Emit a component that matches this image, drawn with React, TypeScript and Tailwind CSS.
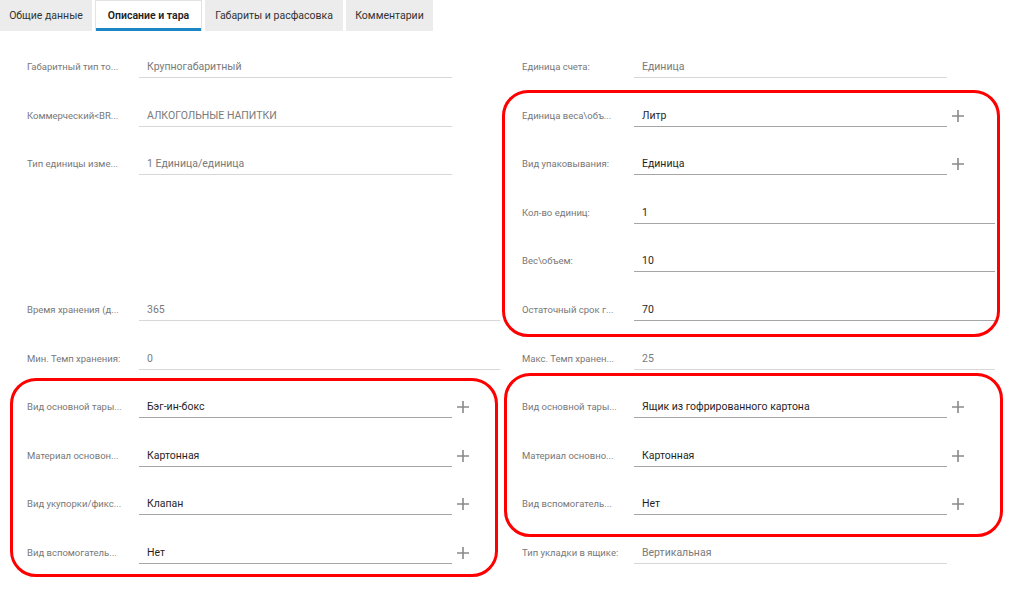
import React from "react";

type Field = {
  label: string;
  value: string;
  editable?: boolean;
  plus?: boolean;
  wide?: boolean;
};

const tabs = ["Общие данные", "Описание и тара", "Габариты и расфасовка", "Комментарии"];
const tabWidths = ["w-[92px]", "w-[107px]", "w-[138px]", "w-[87px]"];

const PlusIcon = () => (
  <svg width="14" height="14" viewBox="0 0 14 14" className="text-[#8a8a8a]">
    <path d="M7 1v12M1 7h12" stroke="currentColor" strokeWidth="1.6" fill="none" />
  </svg>
);

const Row = ({ field }: { field?: Field }) => {
  if (!field) return <div className="h-[48.6px]" />;
  const { label, value, editable, plus, wide } = field;
  return (
    <div className="h-[48.6px] flex items-end pb-[10.6px]">
      <div className="w-[112px] shrink-0 h-[22px] leading-[22px] text-[9.5px] text-[#787878] whitespace-nowrap">
        {label}
      </div>
      <div
        className={`${wide ? "w-[361px]" : "w-[313px]"} h-[22px] border-b pl-[8px] leading-[21px] text-[10.5px] ${
          editable ? "border-[#a6a6a6] text-[#1f1f1f]" : "border-[#d8d8d8] text-[#7a7a7a]"
        }`}
      >
        {value}
      </div>
      {!wide && (
        <div className="w-[48px] h-[22px] flex items-center pl-[4px]">
          {plus && <PlusIcon />}
        </div>
      )}
    </div>
  );
};

// red annotation frame over a group of rows
const Marked = ({ frame, children }: { frame: string; children: React.ReactNode }) => (
  <div className="relative">
    {children}
    <div className={`absolute border-[3px] border-[#ff0000] rounded-[26px] pointer-events-none ${frame}`} />
  </div>
);

const leftTop: (Field | undefined)[] = [
  { label: "Габаритный тип то...", value: "Крупногабаритный" },
  { label: "Коммерческий<BR...", value: "АЛКОГОЛЬНЫЕ НАПИТКИ" },
  { label: "Тип единицы изме...", value: "1 Единица/единица" },
  undefined,
  undefined,
  { label: "Время хранения (д...", value: "365", wide: true },
  { label: "Мин. Темп хранения:", value: "0", wide: true },
];

const leftBottom: Field[] = [
  { label: "Вид основной тары...", value: "Бэг-ин-бокс", editable: true, plus: true },
  { label: "Материал основон...", value: "Картонная", editable: true, plus: true },
  { label: "Вид укупорки/фикс...", value: "Клапан", editable: true, plus: true },
  { label: "Вид вспомогатель...", value: "Нет", editable: true, plus: true },
];

const rightMid: Field[] = [
  { label: "Единица веса\\объ...", value: "Литр", editable: true, plus: true },
  { label: "Вид упаковывания:", value: "Единица", editable: true, plus: true },
  { label: "Кол-во единиц:", value: "1", editable: true, wide: true },
  { label: "Вес\\объем:", value: "10", editable: true, wide: true },
  { label: "Остаточный срок г...", value: "70", editable: true, wide: true },
];

const rightBottom: Field[] = [
  { label: "Вид основной тары...", value: "Ящик из гофрированного картона", editable: true, plus: true },
  { label: "Материал основно...", value: "Картонная", editable: true, plus: true },
  { label: "Вид вспомогатель...", value: "Нет", editable: true, plus: true },
];

export default function App() {
  return (
    <div className="w-[1011px] h-[592px] bg-white overflow-hidden font-['Roboto','Liberation_Sans',sans-serif]">
      <div className="flex gap-[3px] h-[31px]">
        {tabs.map((t, i) =>
          i === 1 ? (
            <div
              key={t}
              className={`${tabWidths[i]} relative bg-white border border-b-0 border-[#e3e3e3] flex items-center justify-center text-[10.5px] font-semibold text-[#222]`}
            >
              {t}
              <div className="absolute left-0 right-0 bottom-0 h-[3px] bg-[#1a86c4]" />
            </div>
          ) : (
            <div
              key={t}
              className={`${tabWidths[i]} bg-[#ececec] flex items-center justify-center text-[10.5px] text-[#333]`}
            >
              {t}
            </div>
          )
        )}
      </div>

      <div className="flex gap-[22px] pl-[27px] pt-[9px]">
        <div className="w-[473px] flex flex-col">
          {leftTop.map((f, i) => (
            <Row key={i} field={f} />
          ))}
          <Marked frame="-left-[17px] right-[2px] -top-[2px] -bottom-[2px]">
            {leftBottom.map((f, i) => (
              <Row key={i} field={f} />
            ))}
          </Marked>
        </div>

        <div className="w-[473px] flex flex-col">
          <Row field={{ label: "Единица счета:", value: "Единица" }} />
          <Marked frame="-left-[20px] -right-[5px] top-[1px] -bottom-[5px]">
            {rightMid.map((f, i) => (
              <Row key={i} field={f} />
            ))}
          </Marked>
          <Row field={{ label: "Макс. Темп хранен...", value: "25", wide: true }} />
          <Marked frame="-left-[18px] -right-[8px] -top-[7px] -bottom-[11px]">
            {rightBottom.map((f, i) => (
              <Row key={i} field={f} />
            ))}
          </Marked>
          <Row field={{ label: "Тип укладки в ящике:", value: "Вертикальная", plus: false }} />
        </div>
      </div>
    </div>
  );
}
